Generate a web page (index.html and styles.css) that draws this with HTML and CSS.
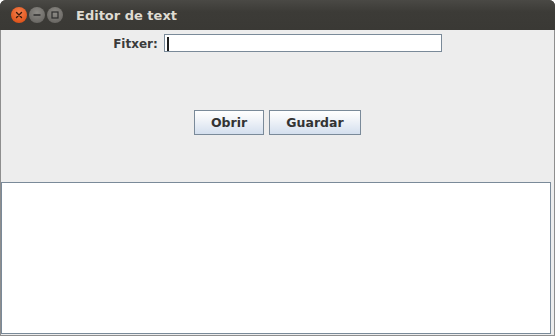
FILE: index.html
```html
<!DOCTYPE html>
<html>
<head>
<meta charset="utf-8">
<link rel="stylesheet" href="styles.css">
</head>
<body>
<div class="window">
  <div class="titlebar">
    <div class="controls">
      <span class="ctl close"><svg width="16" height="16" viewBox="0 0 16 16"><path d="M5.5 5.5 L10.5 10.5 M10.5 5.5 L5.5 10.5" stroke="#3a1a0a" stroke-width="1.4" stroke-linecap="round"/></svg></span>
      <span class="ctl gray"><svg width="16" height="16" viewBox="0 0 16 16"><path d="M4.5 8 H11.5" stroke="#2e2e2e" stroke-width="1.4"/></svg></span>
      <span class="ctl gray"><svg width="16" height="16" viewBox="0 0 16 16"><rect x="5" y="5" width="6" height="6" fill="none" stroke="#2e2e2e" stroke-width="1.2"/></svg></span>
    </div>
    <div class="title">Editor de text</div>
  </div>
  <div class="body">
    <div class="panel">
      <div class="row">
        <label class="label">Fitxer:</label>
        <div class="input"><span class="caret"></span></div>
      </div>
      <div class="buttons">
        <button class="btn obrir">Obrir</button>
        <button class="btn guardar">Guardar</button>
      </div>
    </div>
    <div class="textarea"></div>
  </div>
</div>
</body>
</html>
```
FILE: styles.css
```css
* { box-sizing: border-box; }
html, body { margin: 0; padding: 0; background: #ffffff; }
.window {
  width: 555px;
  height: 336px;
  display: flex;
  flex-direction: column;
  font-family: "DejaVu Sans", "Liberation Sans", sans-serif;
  background: #3c3b37;
  border-radius: 6px 6px 0 0;
  overflow: hidden;
}
.titlebar {
  height: 30px;
  display: flex;
  align-items: center;
  background: linear-gradient(#4a4945, #3c3b37 40%, #3a3935);
  padding-left: 11px;
}
.controls { display: flex; gap: 2px; }
.ctl {
  width: 16px;
  height: 16px;
  border-radius: 50%;
  display: flex;
}
.close { background: radial-gradient(circle at 50% 35%, #f6814f, #e0571e 70%, #c5461a); }
.gray { background: radial-gradient(circle at 50% 35%, #8c8a85, #6d6b67 70%, #5a5854); }
.title {
  margin-left: 13px;
  color: #dfdbd2;
  font-weight: bold;
  font-size: 13px;
}
.body {
  flex: 1;
  display: flex;
  flex-direction: column;
  background: #ededed;
  border-left: 1px solid #8e8e8e;
  border-right: 1px solid #8e8e8e;
  border-bottom: 1px solid #8e8e8e;
  padding-right: 3px;
  padding-bottom: 1px;
}
.panel {
  height: 152px;
  display: flex;
  flex-direction: column;
  align-items: center;
  padding-top: 4px;
  margin-right: -3px;
}
.row {
  display: flex;
  align-items: center;
  gap: 6px;
  height: 18px;
}
.label {
  font-size: 12px;
  font-weight: bold;
  color: #3b3b3b;
  padding-top: 1px;
}
.input {
  width: 278px;
  height: 18px;
  background: #ffffff;
  border: 1px solid #7a8a99;
  padding: 2px 2px;
  display: flex;
}
.caret {
  width: 2px;
  height: 14px;
  background: #1e1e1e;
}
.buttons {
  margin-top: 58px;
  display: flex;
  gap: 5px;
}
.btn {
  height: 25px;
  border: 1px solid #7a8a99;
  border-radius: 0;
  background: linear-gradient(#ffffff, #f2f5f9 35%, #d4dfee);
  font-family: "DejaVu Sans", "Liberation Sans", sans-serif;
  font-weight: bold;
  font-size: 12.5px;
  color: #333333;
  padding: 0;
}
.obrir { width: 70px; }
.guardar { width: 92px; }
.textarea {
  flex: 1;
  background: #ffffff;
  border: 1px solid #7a8a99;
}
```
